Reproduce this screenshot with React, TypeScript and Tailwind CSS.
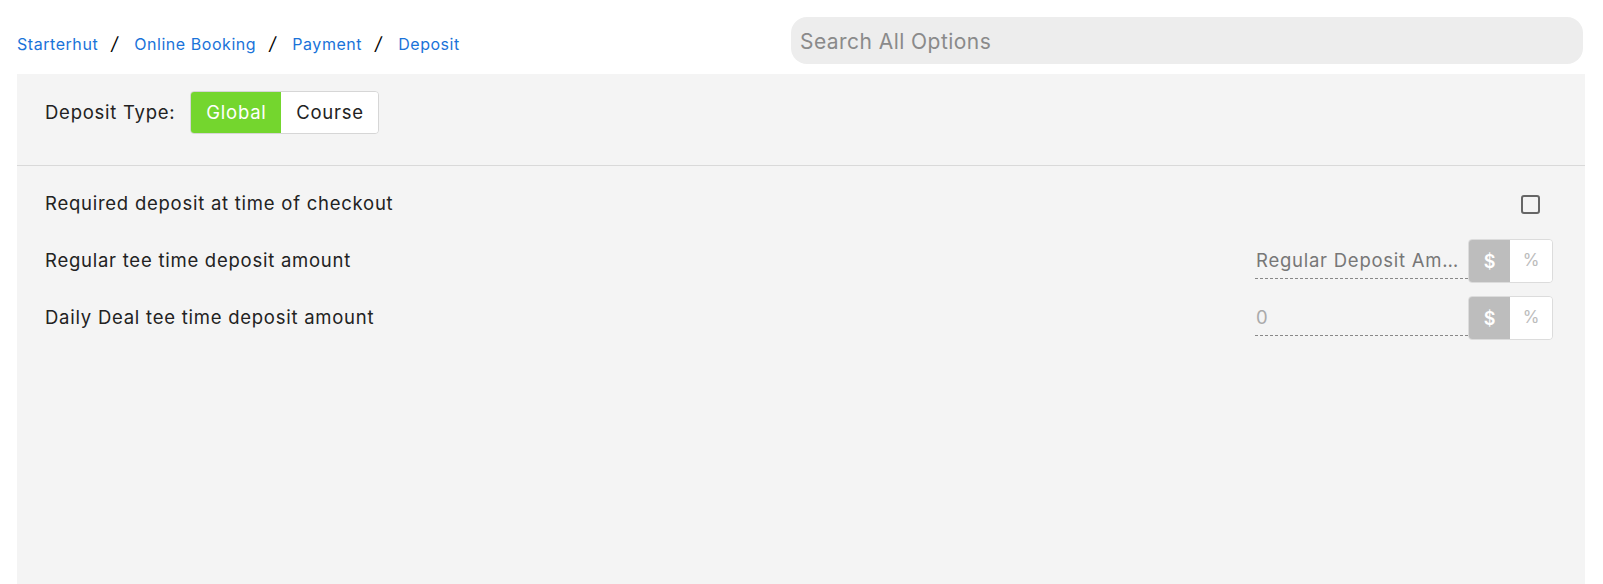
import React from "react";

const font = { fontFamily: "Inter, 'Noto Sans', sans-serif" };

function UnitToggle() {
  return (
    <div className="flex h-[44px] w-[85px] overflow-hidden rounded-[4px] border border-[#dcdcdc]">
      <div className="flex w-[41px] items-center justify-center bg-[#bdbdbd] text-[18px] font-semibold text-white">$</div>
      <div className="flex flex-1 items-center justify-center bg-white text-[17px] text-[#bcbcbc]">%</div>
    </div>
  );
}

function AmountRow({ label, value, valueClass }: { label: string; value: string; valueClass: string }) {
  return (
    <div className="flex h-[44px] items-center justify-between">
      <span className="text-[18.5px] tracking-[0.75px] text-[#222]">{label}</span>
      <div className="flex items-center">
        <div className="flex h-[36px] w-[213px] items-center border-b border-dashed border-[#888] pl-[1px]">
          <span className={`block overflow-hidden text-ellipsis whitespace-nowrap text-[18.5px] tracking-[0.75px] ${valueClass}`}>{value}</span>
        </div>
        <UnitToggle />
      </div>
    </div>
  );
}

export default function App() {
  return (
    <div className="min-h-[584px] bg-white px-[17px] pr-[18px]" style={font}>
      <div className="flex h-[74px] items-start justify-between">
        <nav className="mt-[30px] flex items-center text-[16px] tracking-[0.55px] text-[#1a73d9]">
          <a>Starterhut</a>
          <span className="ml-[13px] mr-[16px] text-[18px] italic text-black">/</span>
          <a>Online Booking</a>
          <span className="ml-[13px] mr-[16px] text-[18px] italic text-black">/</span>
          <a>Payment</a>
          <span className="ml-[13px] mr-[16px] text-[18px] italic text-black">/</span>
          <a>Deposit</a>
        </nav>
        <div className="mt-[17px] mr-[2px] flex h-[47px] w-[792px] items-center rounded-[16px] bg-[#ededed] px-[9px] pt-[3px]">
          <input
            className="w-full bg-transparent text-[21px] tracking-[0.45px] text-[#333] outline-none placeholder:text-[#8a8a8a]"
            placeholder="Search All Options"
            style={font}
          />
        </div>
      </div>

      <div className="min-h-[510px] bg-[#f4f4f4]">
        <div className="flex h-[92px] items-start border-b border-[#d9d9d9] pl-[28px] pt-[17px]">
          <div className="flex h-[43px] items-center">
            <span className="mr-[15px] text-[18.5px] tracking-[0.75px] text-[#222]">Deposit Type:</span>
            <div className="flex h-[43px] overflow-hidden rounded-[4px] border border-[#d6d6d6]">
              <div className="flex w-[90px] items-center justify-center bg-[#74d62e] text-[18.5px] tracking-[0.75px] text-white">Global</div>
              <div className="flex w-[97px] items-center justify-center bg-white text-[18.5px] tracking-[0.75px] text-[#222]">Course</div>
            </div>
          </div>
        </div>

        <div className="flex flex-col gap-[13px] pl-[28px] pr-[32px] pt-[16px]">
          <div className="flex h-[44px] items-center justify-between">
            <span className="text-[18.5px] tracking-[0.75px] text-[#222]">Required deposit at time of checkout</span>
            <div className="mr-[13px] mt-[1px] h-[19px] w-[19px] rounded-[3px] border-2 border-[#666]" />
          </div>
          <AmountRow label="Regular tee time deposit amount" value="Regular Deposit Amount" valueClass="text-[#777]" />
          <AmountRow label="Daily Deal tee time deposit amount" value="0" valueClass="text-[#aaa]" />
        </div>
      </div>
    </div>
  );
}
